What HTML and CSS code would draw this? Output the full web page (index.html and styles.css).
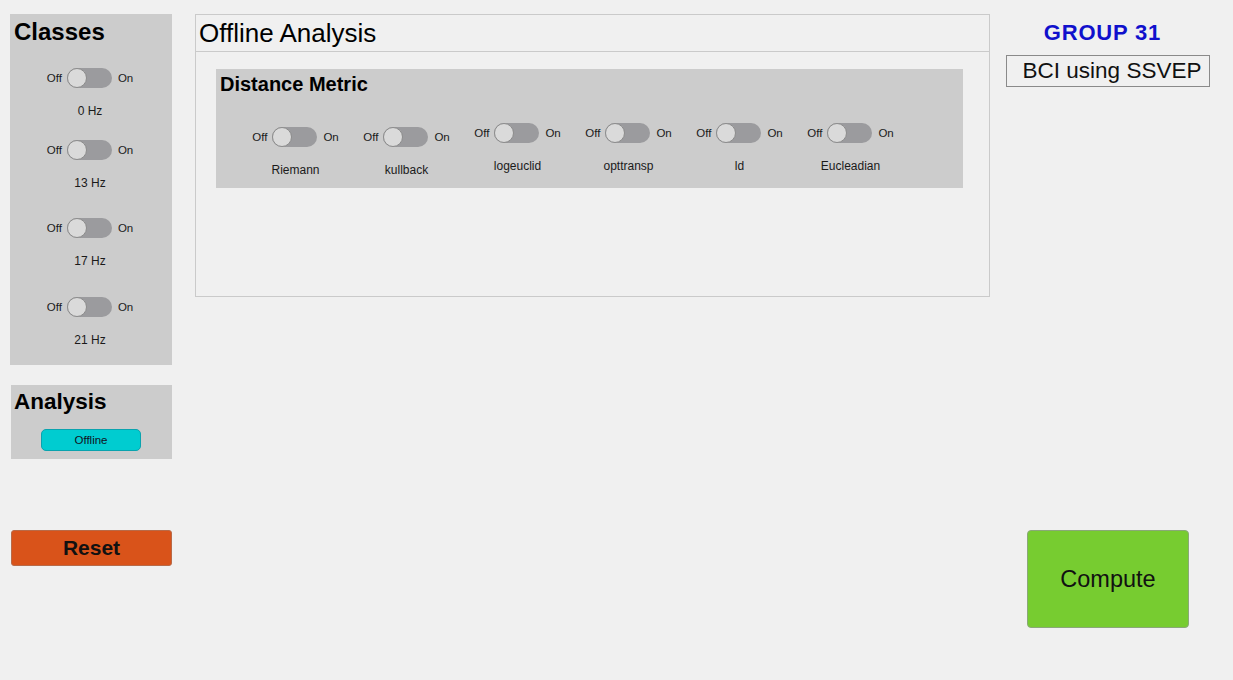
FILE: index.html
```html
<!DOCTYPE html>
<html>
<head>
<meta charset="utf-8">
<title>BCI using SSVEP</title>
<link rel="stylesheet" href="styles.css">
</head>
<body>
<div class="app">
  <aside class="left">
    <section class="panel classes">
      <h2 class="panel-title">Classes</h2>
      <div class="switch-item sp1">
        <div class="switch"><span class="sw-txt">Off</span><span class="track"><span class="knob"></span></span><span class="sw-txt on">On</span></div>
        <div class="sw-label">0 Hz</div>
      </div>
      <div class="switch-item sp2">
        <div class="switch"><span class="sw-txt">Off</span><span class="track"><span class="knob"></span></span><span class="sw-txt on">On</span></div>
        <div class="sw-label">13 Hz</div>
      </div>
      <div class="switch-item sp3">
        <div class="switch"><span class="sw-txt">Off</span><span class="track"><span class="knob"></span></span><span class="sw-txt on">On</span></div>
        <div class="sw-label">17 Hz</div>
      </div>
      <div class="switch-item sp4">
        <div class="switch"><span class="sw-txt">Off</span><span class="track"><span class="knob"></span></span><span class="sw-txt on">On</span></div>
        <div class="sw-label">21 Hz</div>
      </div>
    </section>
    <section class="panel analysis">
      <h2 class="panel-title small">Analysis</h2>
      <button class="btn-offline">Offline</button>
    </section>
    <button class="btn-reset">Reset</button>
  </aside>

  <main class="main">
    <header class="main-title">Offline Analysis</header>
    <div class="main-body">
      <section class="panel dm">
        <h2 class="dm-title">Distance Metric</h2>
        <div class="dm-row">
          <div class="switch-item group low">
            <div class="switch"><span class="sw-txt">Off</span><span class="track"><span class="knob"></span></span><span class="sw-txt on">On</span></div>
            <div class="sw-label">Riemann</div>
          </div>
          <div class="switch-item group low">
            <div class="switch"><span class="sw-txt">Off</span><span class="track"><span class="knob"></span></span><span class="sw-txt on">On</span></div>
            <div class="sw-label">kullback</div>
          </div>
          <div class="switch-item group">
            <div class="switch"><span class="sw-txt">Off</span><span class="track"><span class="knob"></span></span><span class="sw-txt on">On</span></div>
            <div class="sw-label">logeuclid</div>
          </div>
          <div class="switch-item group">
            <div class="switch"><span class="sw-txt">Off</span><span class="track"><span class="knob"></span></span><span class="sw-txt on">On</span></div>
            <div class="sw-label">opttransp</div>
          </div>
          <div class="switch-item group">
            <div class="switch"><span class="sw-txt">Off</span><span class="track"><span class="knob"></span></span><span class="sw-txt on">On</span></div>
            <div class="sw-label">ld</div>
          </div>
          <div class="switch-item group">
            <div class="switch"><span class="sw-txt">Off</span><span class="track"><span class="knob"></span></span><span class="sw-txt on">On</span></div>
            <div class="sw-label">Eucleadian</div>
          </div>
        </div>
      </section>
    </div>
  </main>

  <aside class="right">
    <div class="group-title">GROUP 31</div>
    <div class="subtitle">BCI using SSVEP</div>
    <button class="btn-compute">Compute</button>
  </aside>
</div>
</body>
</html>
```

FILE: styles.css
```css
* { box-sizing: border-box; }

html, body {
  margin: 0;
  padding: 0;
  background: #f0f0f0;
  font-family: "Liberation Sans", Arial, sans-serif;
  color: #111;
}

.app {
  display: flex;
  align-items: flex-start;
  padding: 14px 0 0 10px;
  height: 680px;
  overflow: hidden;
}

/* ---------- left column ---------- */
.left {
  width: 162px;
  display: flex;
  flex-direction: column;
}

.panel {
  background: #cccccc;
}

.classes {
  width: 162px;
  height: 351px;
  padding: 5px 0 0 4px;
  display: flex;
  flex-direction: column;
}

.panel-title {
  margin: 0;
  font-size: 24px;
  line-height: 26px;
  font-weight: bold;
  color: #000;
}

.panel-title.small {
  font-size: 22.5px;
}

.switch-item {
  display: flex;
  flex-direction: column;
  align-items: center;
}

.classes .switch-item { margin-right: 6px; }
.classes .sp1 { margin-top: 23px; }
.classes .sp2 { margin-top: 22px; }
.classes .sp3 { margin-top: 28px; }
.classes .sp4 { margin-top: 29px; }

.switch {
  display: flex;
  align-items: center;
  height: 20px;
}

.sw-txt {
  font-size: 11.5px;
  line-height: 14px;
  color: #1a1a1a;
  margin-right: 5px;
}

.sw-txt.on {
  margin-right: 0;
  margin-left: 6px;
}

.track {
  display: flex;
  align-items: center;
  width: 45px;
  height: 20px;
  border-radius: 10px;
  background: #9b9b9e;
}

.knob {
  width: 20px;
  height: 20px;
  border-radius: 50%;
  background: #dadada;
  border: 1px solid #8c8c8c;
}

.sw-label {
  margin-top: 16px;
  font-size: 12px;
  line-height: 14px;
  color: #1a1a1a;
}

.analysis {
  margin: 20px 0 0 1px;
  width: 161px;
  height: 74px;
  padding: 4px 0 0 3px;
  display: flex;
  flex-direction: column;
}

.btn-offline {
  align-self: center;
  margin: 14px 4px 0 0;
  width: 100px;
  height: 22px;
  padding: 0;
  background: #00ccd0;
  border: 1px solid #0aa3ae;
  border-radius: 5px;
  font-family: "Liberation Sans", Arial, sans-serif;
  font-size: 11.5px;
  color: #112;
}

.btn-reset {
  margin: 71px 0 0 1px;
  width: 161px;
  height: 36px;
  padding: 0;
  background: #d9531a;
  border: 1px solid #b86a48;
  border-radius: 3px;
  font-family: "Liberation Sans", Arial, sans-serif;
  font-size: 21px;
  font-weight: bold;
  color: #111;
}

/* ---------- main panel ---------- */
.main {
  margin-left: 23px;
  width: 795px;
  height: 283px;
  border: 1px solid #cacaca;
}

.main-title {
  height: 37px;
  line-height: 36px;
  padding-left: 3px;
  font-size: 26px;
  color: #000;
  border-bottom: 1px solid #cacaca;
}

.main-body {
  padding: 17px 0 0 20px;
}

.dm {
  width: 747px;
  height: 119px;
  padding: 3px 0 0 24px;
}

.dm-title {
  margin: 0 0 0 -20px;
  font-size: 20px;
  line-height: 24px;
  font-weight: bold;
  color: #000;
}

.dm-row {
  display: flex;
  align-items: flex-start;
  margin-top: 27px;
}

.dm .group {
  width: 111px;
}

.dm .group.low {
  padding-top: 4px;
}

/* ---------- right column ---------- */
.right {
  margin-left: 16px;
  width: 204px;
  display: flex;
  flex-direction: column;
}

.group-title {
  margin-top: 6px;
  padding-right: 11px;
  text-align: center;
  font-size: 22px;
  line-height: 26px;
  font-weight: bold;
  letter-spacing: 0.8px;
  color: #1010cc;
}

.subtitle {
  margin-top: 9px;
  height: 32px;
  border: 1px solid #8a8a8a;
  background: #f0f0f0;
  text-align: center;
  padding-left: 8px;
  font-size: 22.5px;
  line-height: 30px;
  color: #111;
}

.btn-compute {
  margin: 443px 0 0 21px;
  width: 162px;
  height: 98px;
  padding: 0;
  background: #77cc30;
  border: 1px solid #8aa878;
  border-radius: 4px;
  font-family: "Liberation Sans", Arial, sans-serif;
  font-size: 23.5px;
  color: #111;
}
```
